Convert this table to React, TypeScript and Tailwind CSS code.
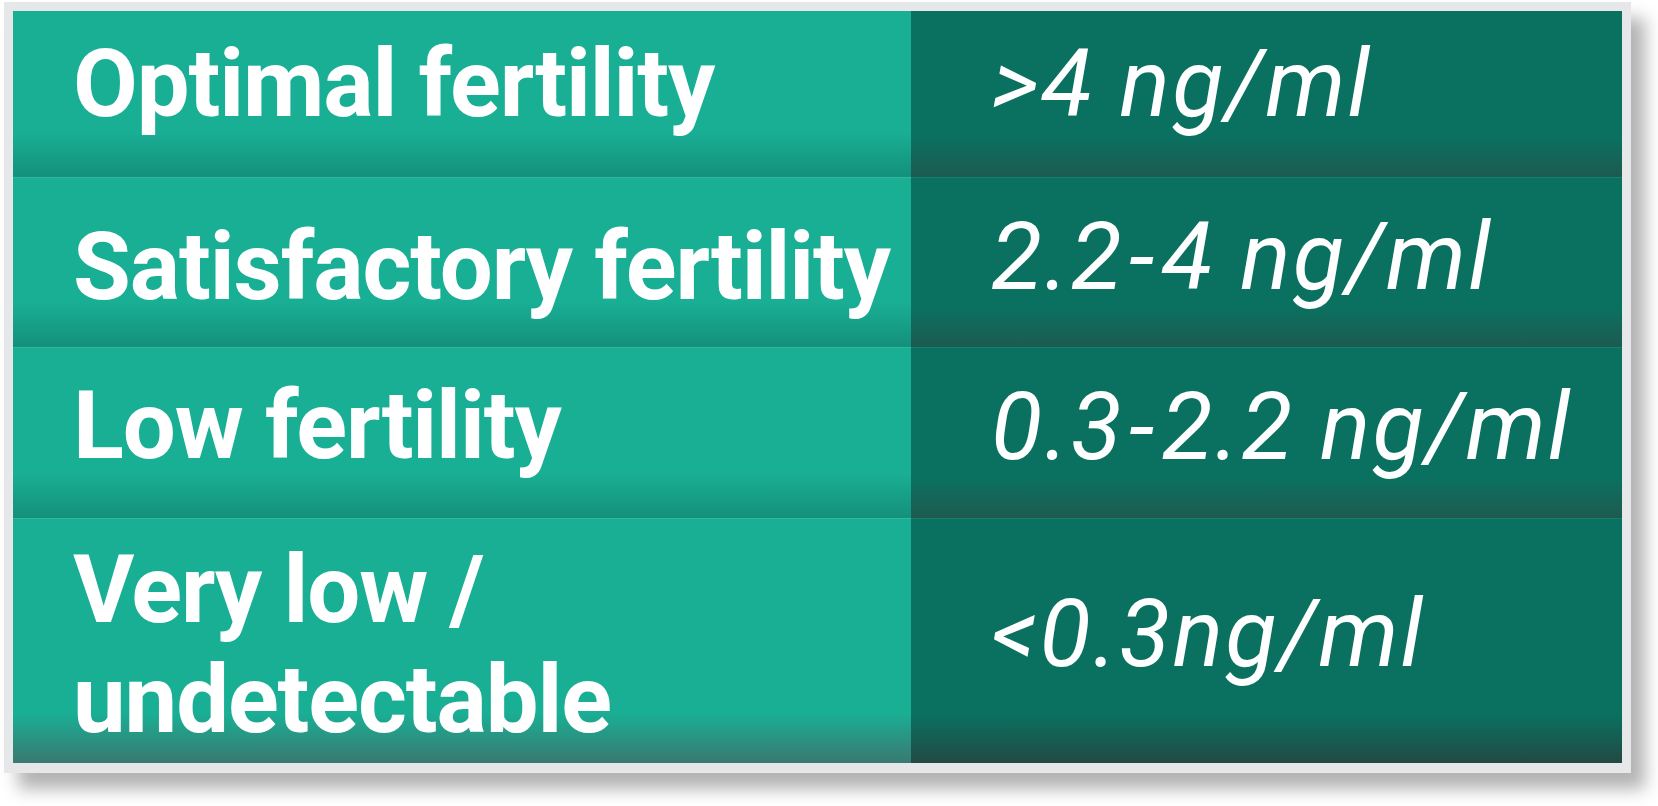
import React from "react";

type Row = {
  label: React.ReactNode;
  value: React.ReactNode;
  h: string;
  leftPad: string;
  rightPad: string;
  leftBg: string;
  rightBg: string;
  first?: boolean;
};

const Dash = () => <span className="mx-[5px]">-</span>;

const rows: Row[] = [
  {
    label: "Optimal fertility",
    value: ">4 ng/ml",
    h: "h-[166px]",
    leftPad: "pb-[20px]",
    rightPad: "pb-[20px]",
    leftBg: "bg-[linear-gradient(to_bottom,#19af95_calc(100%-45px),#14907b)]",
    rightBg: "bg-[linear-gradient(to_bottom,#0a7160_calc(100%-40px),#1e5a50)]",
    first: true,
  },
  {
    label: "Satisfactory fertility",
    value: (
      <>
        2.2
        <Dash />4 ng/ml
      </>
    ),
    h: "h-[170px]",
    leftPad: "pt-[8px]",
    rightPad: "pb-[12px]",
    leftBg: "bg-[linear-gradient(to_bottom,#19af95_calc(100%-45px),#14907b)]",
    rightBg: "bg-[linear-gradient(to_bottom,#0a7160_calc(100%-40px),#1e5a50)]",
  },
  {
    label: "Low fertility",
    value: (
      <>
        0.3
        <Dash />
        2.2 ng/ml
      </>
    ),
    h: "h-[171px]",
    leftPad: "pb-[14px]",
    rightPad: "pb-[12px]",
    leftBg: "bg-[linear-gradient(to_bottom,#19af95_calc(100%-45px),#14907b)]",
    rightBg: "bg-[linear-gradient(to_bottom,#0a7160_calc(100%-40px),#1e5a50)]",
  },
  {
    label: (
      <>
        Very low /
        <br />
        undetectable
      </>
    ),
    value: "<0.3ng/ml",
    h: "h-[245px]",
    leftPad: "pt-[8px]",
    rightPad: "pb-[14px]",
    leftBg: "bg-[linear-gradient(to_bottom,#19af95_calc(100%-50px),#3a7970)]",
    rightBg: "bg-[linear-gradient(to_bottom,#0a7160_calc(100%-50px),#224a44)]",
  },
];

export default function App() {
  return (
    <div className="w-[1658px] h-[806px] bg-white pl-[4px] pt-[2px] font-['Roboto',sans-serif] overflow-hidden">
      <div className="w-[1627px] h-[771px] bg-[#e6e7e9] p-[9px] shadow-[14px_16px_16px_rgba(0,0,0,0.3)]">
        <div className="flex flex-col w-[1609px] h-[752px]">
          {rows.map((r, i) => (
            <div key={i} className={`flex ${r.h}`}>
              <div
                className={`w-[898px] flex items-center pl-[60px] text-white font-bold text-[94px] leading-[110px] tracking-[-1.1px] whitespace-nowrap ${r.leftBg} ${r.leftPad} ${
                  r.first ? "" : "border-t border-[#2cb9a0]"
                }`}
              >
                <div>{r.label}</div>
              </div>
              <div
                className={`flex-1 flex items-center pl-[80px] text-white italic font-normal text-[94px] leading-[110px] tracking-[2.2px] whitespace-nowrap ${r.rightBg} ${r.rightPad} ${
                  r.first ? "" : "border-t border-[#14806e]"
                }`}
              >
                <div>{r.value}</div>
              </div>
            </div>
          ))}
        </div>
      </div>
    </div>
  );
}
